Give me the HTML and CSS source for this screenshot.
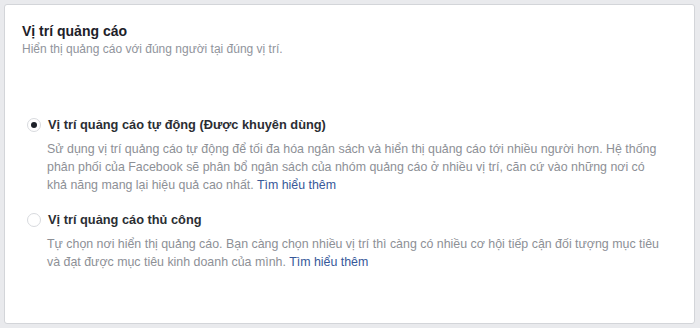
FILE: index.html
```html
<!DOCTYPE html>
<html lang="vi">
    <head>
        <meta charset="UTF-8">
        <title>Vị trí quảng cáo</title>
        <link rel="stylesheet" href="styles.css">
    </head>
    <body>
        <div class="card">
            <div class="header">
                <h2>Vị trí quảng cáo</h2>
                <p class="sub">Hiển thị quảng cáo với đúng người tại đúng vị trí.</p>
            </div>
            <div class="options">
                <div class="option">
                    <div class="row">
                        <span class="radio checked"></span>
                        <span class="label">Vị trí quảng cáo tự động (Được khuyên dùng)</span>
                    </div>
                    <p class="desc">Sử dụng vị trí quảng cáo tự động để tối đa hóa ngân sách và hiển thị quảng cáo tới nhiều người hơn. Hệ thống<br>phân phối của Facebook sẽ phân bổ ngân sách của nhóm quảng cáo ở nhiều vị trí, căn cứ vào những nơi có<br>khả năng mang lại hiệu quả cao nhất. <a href="#">Tìm hiểu thêm</a></p>
                </div>
                <div class="option">
                    <div class="row">
                        <span class="radio"></span>
                        <span class="label">Vị trí quảng cáo thủ công</span>
                    </div>
                    <p class="desc">Tự chọn nơi hiển thị quảng cáo. Bạn càng chọn nhiều vị trí thì càng có nhiều cơ hội tiếp cận đối tượng mục tiêu<br>và đạt được mục tiêu kinh doanh của mình. <a href="#">Tìm hiểu thêm</a></p>
                </div>
            </div>
        </div>
    </body>
</html>
```
FILE: styles.css
```css
body {
    margin: 0;
    padding: 4px 5px 4px 4px;
    background-color: #e9eaed;
    font-family: "Liberation Sans", Arial, sans-serif;
    height: 328px;
    box-sizing: border-box;
}

.card {
    background-color: #fff;
    border: 1px solid #d3d5d9;
    border-radius: 3px;
    height: 100%;
    box-sizing: border-box;
    padding: 17px 17px;
}

h2 {
    margin: 0;
    font-size: 14px;
    font-weight: bold;
    color: #1d2129;
    line-height: 18px;
}

.sub {
    margin: 1px 0 0;
    font-size: 12px;
    color: #90949c;
    line-height: 16px;
}

.options {
    margin-top: 59px;
}

.option {
    margin-bottom: 17px;
}

.row {
    display: flex;
    align-items: center;
    gap: 7px;
}

.radio {
    width: 12px;
    height: 12px;
    border: 1px solid #d8dade;
    border-radius: 50%;
    margin-left: 5px;
    display: flex;
    align-items: center;
    justify-content: center;
}

.radio.checked::after {
    content: "";
    width: 6px;
    height: 6px;
    border-radius: 50%;
    background-color: #1d2129;
}

.label {
    font-size: 12.8px;
    font-weight: bold;
    color: #2b2e33;
    line-height: 18px;
}

.desc {
    margin: 6px 0 0 25px;
    font-size: 12.4px;
    line-height: 18px;
    color: #8d9096;
    white-space: nowrap;
}

.desc a {
    color: #365899;
    text-decoration: none;
}
```
